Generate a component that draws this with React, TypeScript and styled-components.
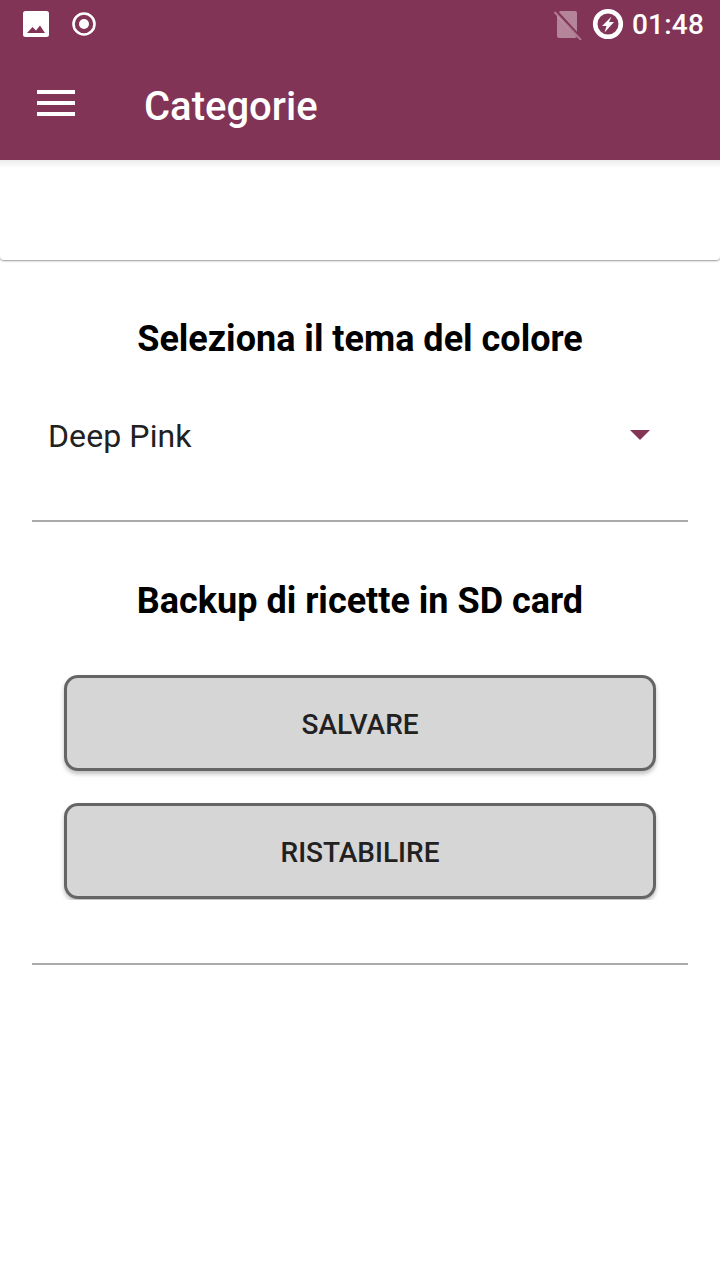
import React from "react";
import styled, { createGlobalStyle } from "styled-components";

const Global = createGlobalStyle`
  html, body { margin: 0; padding: 0; background: #fff; }
  body { font-family: Roboto, "Liberation Sans", sans-serif; }
`;

const Page = styled.div`
  width: 720px;
  height: 1280px;
  background: #fff;
  display: flex;
  flex-direction: column;
  overflow: hidden;
`;

const AppBar = styled.header`
  height: 160px;
  flex: none;
  background: #823456;
  display: flex;
  flex-direction: column;
  position: relative;
  z-index: 2;
`;

const StatusBar = styled.div`
  height: 48px;
  display: flex;
  align-items: center;
  padding: 0 16px 0 20px;
  color: #fff;
`;

const StatusLeft = styled.div`
  display: flex;
  align-items: center;
  gap: 16px;
  flex: 1;
`;

const StatusRight = styled.div`
  display: flex;
  align-items: center;
`;

const Clock = styled.span`
  font-size: 28px;
  font-weight: 500;
  letter-spacing: 0.2px;
  line-height: 48px;
  margin-left: 7px;
  padding-top: 2px;
`;

const Toolbar = styled.div`
  height: 112px;
  box-sizing: border-box;
  display: flex;
  align-items: center;
  padding: 6px 0 0 37px;
`;

const Burger = styled.div`
  width: 38px;
  height: 26px;
  display: flex;
  flex-direction: column;
  justify-content: space-between;
  margin-top: -8px;
`;

const BurgerLine = styled.span`
  height: 4px;
  background: #fff;
`;

const Title = styled.h1`
  margin: 0 0 0 69px;
  font-size: 40px;
  font-weight: 500;
  color: #fff;
  line-height: 44px;
`;

const Card = styled.div`
  height: 100px;
  flex: none;
  background: #fff;
  border-radius: 0 0 4px 4px;
  box-shadow: 0 1px 2px rgba(0, 0, 0, 0.4);
  position: relative;
`;

const TopShade = styled.div`
  height: 8px;
  background: linear-gradient(rgba(0, 0, 0, 0.08), rgba(0, 0, 0, 0));
`;

const Content = styled.main`
  padding: 0 32px;
  display: flex;
  flex-direction: column;
`;

const SectionTitle = styled.h2<{ $top: number }>`
  margin: ${(p) => p.$top}px 0 0;
  text-align: center;
  font-size: 36px;
  font-weight: 700;
  line-height: 44px;
  color: #000;
`;

const Spinner = styled.div`
  height: 60px;
  margin-top: 45px;
  padding: 0 38px 0 16px;
  display: flex;
  align-items: center;
  justify-content: space-between;
`;

const SpinnerText = styled.span`
  font-size: 32px;
  color: #212121;
  letter-spacing: 0.1px;
  line-height: 60px;
`;

const Caret = styled.span`
  width: 0;
  height: 0;
  border-left: 10px solid transparent;
  border-right: 10px solid transparent;
  border-top: 10px solid #833556;
  margin-top: -2px;
`;

const Divider = styled.hr<{ $top: number }>`
  margin: ${(p) => p.$top}px 0 0;
  border: 0;
  height: 2px;
  background: #aaaaaa;
  flex: none;
`;

const Buttons = styled.div`
  margin-top: 50px;
  height: 225px;
  padding: 2px 32px 0;
  display: flex;
  flex-direction: column;
  gap: 32px;
  overflow: hidden;
  flex: none;
`;

const ActionButton = styled.button`
  height: 96px;
  flex: none;
  box-sizing: border-box;
  background: #d6d6d6;
  border: 3px solid #656565;
  border-radius: 14px;
  box-shadow: 0 3px 4px rgba(0, 0, 0, 0.25);
  font-family: Roboto, "Liberation Sans", sans-serif;
  font-size: 28px;
  font-weight: 500;
  color: #212121;
  padding: 2px 0 0;
`;

export default function App() {
  return (
    <Page>
      <Global />
      <AppBar>
        <StatusBar>
          <StatusLeft>
            <svg width="32" height="32" viewBox="0 0 32 32">
              <rect x="3" y="3" width="26" height="26" rx="2.5" fill="#fff" />
              <path d="M7 25 L12.5 19 L16 22.5 L20 17.5 L25 25 Z" fill="#823456" />
            </svg>
            <svg width="32" height="32" viewBox="0 0 32 32">
              <circle cx="16" cy="16" r="10.5" fill="none" stroke="#fff" strokeWidth="2.6" />
              <circle cx="16" cy="16" r="5" fill="#fff" />
            </svg>
          </StatusLeft>
          <StatusRight>
            <svg width="30" height="32" viewBox="0 0 30 32">
              <path d="M6 3 H21 A2 2 0 0 1 23 5 V28 A2 2 0 0 1 21 30 H5 A2 2 0 0 1 3 28 V6 Z" fill="#fff" fillOpacity="0.4" />
              <path d="M1.5 3 L28 32" stroke="#823456" strokeWidth="3.6" />
              <path d="M0.5 4 L27 32" stroke="#fff" strokeOpacity="0.35" strokeWidth="2" />
            </svg>
            <svg width="34" height="34" viewBox="0 0 34 34" style={{ marginLeft: 7 }}>
              <circle cx="17" cy="17" r="12.8" fill="none" stroke="#fff" strokeWidth="4.6" />
              <path d="M20.5 9.5 L11 19 H15.5 L13.5 25.5 L23 15 H18 Z" fill="#fff" />
            </svg>
            <Clock>01:48</Clock>
          </StatusRight>
        </StatusBar>
        <Toolbar>
          <Burger>
            <BurgerLine />
            <BurgerLine />
            <BurgerLine />
          </Burger>
          <Title>Categorie</Title>
        </Toolbar>
      </AppBar>
      <Card>
        <TopShade />
      </Card>
      <Content>
        <SectionTitle $top={57}>Seleziona il tema del colore</SectionTitle>
        <Spinner>
          <SpinnerText>Deep Pink</SpinnerText>
          <Caret />
        </Spinner>
        <Divider $top={54} />
        <SectionTitle $top={57}>Backup di ricette in SD card</SectionTitle>
        <Buttons>
          <ActionButton>SALVARE</ActionButton>
          <ActionButton>RISTABILIRE</ActionButton>
        </Buttons>
        <Divider $top={63} />
      </Content>
    </Page>
  );
}
